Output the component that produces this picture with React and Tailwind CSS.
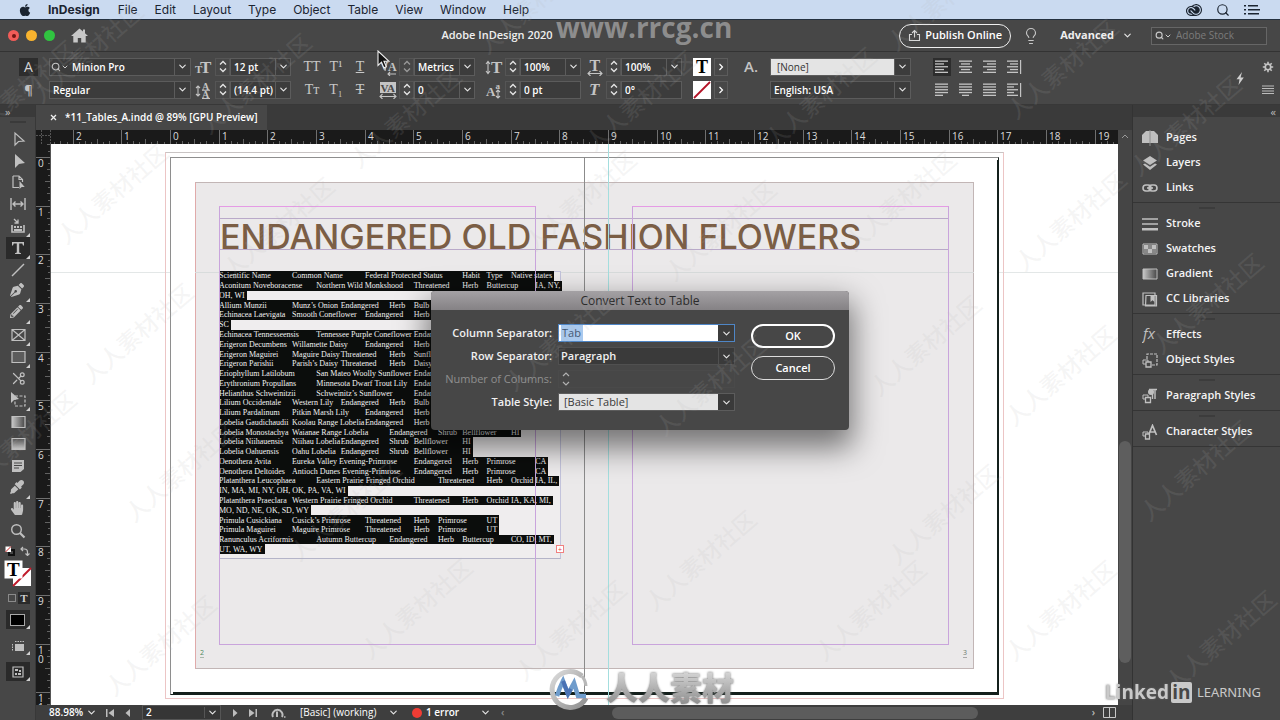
import React from "react";
import { FaApple, FaHandPaper, FaEyeDropper, FaPenNib, FaPencilAlt } from "react-icons/fa";
import { SiAdobecreativecloud } from "react-icons/si";
import { ChevronDown, Search, Scissors, Lightbulb } from "lucide-react";

const INCH = 48.66;
const TAB = INCH / 2;

const MENUS = ["File", "Edit", "Layout", "Type", "Object", "Table", "View", "Window", "Help"];

// Each line is a list of [tab stop, text] pairs.
const LINES = [
  [[0, "Scientific Name"], [3, "Common Name"], [6, "Federal Protected Status"], [10, "Habit"], [11, "Type"], [12, "Native states"]],
  [[0, "Aconitum Noveboracense"], [4, "Northern Wild Monkshood"], [8, "Threatened"], [10, "Herb"], [11, "Buttercup"], [13, "IA, NY,"]],
  [[0, "OH, WI"]],
  [[0, "Allium Munzii"], [3, "Munz’s Onion"], [5, "Endangered"], [7, "Herb"], [8, "Bulb"]],
  [[0, "Echinacea Laevigata"], [3, "Smooth Coneflower"], [6, "Endangered"], [8, "Herb"]],
  [[0, "SC"]],
  [[0, "Echinacea Tennesseensis"], [4, "Tennessee Purple Coneflower"], [8, "Endangered"]],
  [[0, "Erigeron Decumbens"], [3, "Willamette Daisy"], [6, "Endangered"], [8, "Herb"]],
  [[0, "Erigeron Maguirei"], [3, "Maguire Daisy"], [5, "Threatened"], [7, "Herb"], [8, "Sunflower"]],
  [[0, "Erigeron Parishii"], [3, "Parish’s Daisy"], [5, "Threatened"], [7, "Herb"], [8, "Daisy"]],
  [[0, "Eriophyllum Latilobum"], [4, "San Mateo Woolly Sunflower"], [8, "Endangered"]],
  [[0, "Erythronium Propullans"], [4, "Minnesota Dwarf Trout Lily"], [8, "Endangered"]],
  [[0, "Helianthus Schweinitzii"], [4, "Schweinitz’s Sunflower"], [8, "Endangered"]],
  [[0, "Lilium Occidentale"], [3, "Western Lily"], [5, "Endangered"], [7, "Herb"], [8, "Bulb"]],
  [[0, "Lilium Pardalinum"], [3, "Pitkin Marsh Lily"], [6, "Endangered"], [8, "Herb"]],
  [[0, "Lobelia Gaudichaudii"], [3, "Koolau Range Lobelia"], [6, "Endangered"], [8, "Herb"]],
  [[0, "Lobelia Monostachya"], [3, "Waianae Range Lobelia"], [7, "Endangered"], [9, "Shrub"], [10, "Bellflower"], [12, "HI"]],
  [[0, "Lobelia Niihauensis"], [3, "Niihau Lobelia"], [5, "Endangered"], [7, "Shrub"], [8, "Bellflower"], [10, "HI"]],
  [[0, "Lobelia Oahuensis"], [3, "Oahu Lobelia"], [5, "Endangered"], [7, "Shrub"], [8, "Bellflower"], [10, "HI"]],
  [[0, "Oenothera Avita"], [3, "Eureka Valley Evening-Primrose"], [8, "Endangered"], [10, "Herb"], [11, "Primrose"], [13, "CA"]],
  [[0, "Oenothera Deltoides"], [3, "Antioch Dunes Evening-Primrose"], [8, "Endangered"], [10, "Herb"], [11, "Primrose"], [13, "CA"]],
  [[0, "Platanthera Leucophaea"], [4, "Eastern Prairie Fringed Orchid"], [9, "Threatened"], [11, "Herb"], [12, "Orchid"], [13, "IA, IL,"]],
  [[0, "IN, MA, MI, NY, OH, OK, PA, VA, WI"]],
  [[0, "Platanthera Praeclara"], [3, "Western Prairie Fringed Orchid"], [8, "Threatened"], [10, "Herb"], [11, "Orchid"], [12, "IA, KA, MI,"]],
  [[0, "MO, ND, NE, OK, SD, WY"]],
  [[0, "Primula Cusickiana"], [3, "Cusick’s Primrose"], [6, "Threatened"], [8, "Herb"], [9, "Primrose"], [11, "UT"]],
  [[0, "Primula Maguirei"], [3, "Maguire Primrose"], [6, "Threatened"], [8, "Herb"], [9, "Primrose"], [11, "UT"]],
  [[0, "Ranunculus Acriformis"], [4, "Autumn Buttercup"], [7, "Endangered"], [9, "Herb"], [10, "Buttercup"], [12, "CO, ID, MT,"]],
  [[0, "UT, WA, WY"]],
];

const MARKS = [
  [87, 52], [255, 83], [405, 117], [533, 3], [640, 100], [820, 97], [1062, 68], [942, 0], [1185, 125],
  [112, 193], [278, 227], [137, 333], [20, 90], [20, 440], [180, 471], [160, 645],
  [580, 200], [720, 230], [710, 385], [560, 340],
  [900, 200], [925, 345], [943, 514], [1070, 220], [1060, 375], [1207, 303], [1195, 470],
  [345, 510], [416, 608], [570, 630], [700, 560], [870, 610], [1060, 610], [1220, 640],
];

function Chev({ className = "" }) {
  return <ChevronDown className={"pointer-events-none size-[11px] shrink-0 text-[#e6e6e6] " + className} strokeWidth={2.5} aria-hidden="true" />;
}

function Drop({ label, value, className, arrow = "w-4", field = "bg-[#3c3c3c] text-white", pad = "pl-[3px]", icon }) {
  return (
    <div className={"relative flex h-[18px] items-center border border-[#5c5c5c] " + field + " " + className}>
      {icon}
      <select aria-label={label} defaultValue={value} className={"h-full min-w-0 flex-1 appearance-none bg-transparent leading-4 outline-none " + pad}>
        <option>{value}</option>
      </select>
      <span className={"pointer-events-none flex h-full items-center justify-center border-l border-[#5c5c5c] bg-[#3c3c3c] " + arrow}>
        <Chev />
      </span>
    </div>
  );
}

function Stepper({ dim }) {
  return (
    <button aria-label="Step value" className={"flex h-[18px] w-[15px] flex-col items-center justify-center border border-[#555] " + (dim ? "text-[#9a9a9a]" : "text-[#e6e6e6]")}>
      <svg width="8" height="13" viewBox="0 0 8 13" fill="none" stroke="currentColor" strokeWidth="1.3"><path d="M1 4.5 4 1.5 7 4.5M1 8.5 4 11.5 7 8.5" /></svg>
    </button>
  );
}

function NumField({ label, value, drop = true, dim, width = "w-[61px]" }) {
  return (
    <div className="flex">
      <Stepper dim={dim} />
      <div className={"flex h-[18px] items-center border border-[#5c5c5c] bg-[#3c3c3c] " + width}>
        <input aria-label={label} defaultValue={value} className="h-full w-0 min-w-0 flex-1 bg-transparent pl-[3px] text-white outline-none" />
        {drop && <span className="flex h-full w-[15px] items-center justify-center border-l border-[#5c5c5c]"><Chev /></span>}
      </div>
    </div>
  );
}

function Glyph({ children, w = 18, h = 18, label }) {
  return (
    <svg width={w} height={h} viewBox={`0 0 ${w} ${h}`} className="shrink-0 text-[#c4c4c4]" role="img" aria-label={label}>{children}</svg>
  );
}

const serif = { fontFamily: "Liberation Serif, serif" };

function Arrow({ d }) {
  return <path d={d} fill="none" stroke="currentColor" strokeWidth="1.1" />;
}

function AlignIcon({ rows, bar }) {
  return (
    <svg width="16" height="16" viewBox="0 0 16 16" fill="#c4c4c4" aria-hidden="true">
      {rows.map(([x, w], i) => <rect key={i} x={x} y={1.5 + i * 2.8} width={w} height="1.3" />)}
      {bar && <rect x="14" y="1" width="1.2" height="14" />}
    </svg>
  );
}

const ALIGNS = [
  ["Align left", [[1, 13], [1, 9], [1, 13], [1, 9], [1, 13]]],
  ["Align center", [[1, 13], [3, 9], [1, 13], [3, 9], [1, 13]]],
  ["Align right", [[1, 13], [5, 9], [1, 13], [5, 9], [1, 13]]],
  ["Align towards spine", [[1, 11], [4, 8], [1, 11], [4, 8], [1, 11]], true],
  ["Justify last left", [[1, 13], [1, 13], [1, 13], [1, 13], [1, 8]]],
  ["Justify last center", [[1, 13], [1, 13], [1, 13], [1, 13], [4, 7]]],
  ["Justify all", [[1, 13], [1, 13], [1, 13], [1, 13], [1, 13]]],
  ["Align away from spine", [[1, 11], [1, 7], [1, 11], [1, 7], [1, 11]], true],
];

function MenuBar() {
  return (
    <nav className="flex h-5 shrink-0 items-center border-b border-[#24303f] bg-[#cadaf0] font-['Inter',sans-serif] text-[12px] text-[#1b2430]">
      <FaApple className="ml-[18px] size-[14px]" aria-label="Apple menu" />
      <button className="ml-4 font-bold">InDesign</button>
      <div className="ml-[18px] flex gap-[17px]">
        {MENUS.map((m) => <button key={m}>{m}</button>)}
      </div>
      <div className="ml-auto flex items-center gap-[14px] pr-5">
        <SiAdobecreativecloud className="size-[16px]" aria-label="Creative Cloud" />
        <Search className="size-[14px]" aria-label="Search" />
        <svg width="16" height="12" viewBox="0 0 16 12" fill="currentColor" role="img" aria-label="Notifications"><path d="M0 1h2v1.6H0zM4 1h10v1.6H4zM0 5h2v1.6H0zM4 5h12v1.6H4zM0 9h2v1.6H0zM4 9h11v1.6H4z" /></svg>
      </div>
    </nav>
  );
}

function TitleBar() {
  return (
    <header className="grid h-8 shrink-0 grid-cols-[1fr_auto_1fr] items-center border-b border-[#333] bg-[#474747] text-[11px] text-[#efefef]">
      <div className="flex items-center pl-2">
        <button aria-label="Close window" className="flex size-[11px] items-center justify-center rounded-full bg-[#f25c58]"><span className="size-1 rounded-full bg-[#701512]" /></button>
        <button aria-label="Minimize window" className="ml-[7px] size-[11px] rounded-full bg-[#f8b32e]" />
        <button aria-label="Zoom window" className="ml-[7px] size-[11px] rounded-full bg-[#30c440]" />
        <button aria-label="Home" className="ml-4">
          <svg width="17" height="15" viewBox="0 0 17 15" fill="#c8c8c8"><path d="M8.500 .5 0 8h2.300v6.500h4.500v-4.500h3.400v4.500h4.500V8H17l-3-2.700V1.500h-2v2z" /></svg>
        </button>
      </div>
      <div className="pr-[286px] font-semibold">Adobe InDesign 2020</div>
      <div className="flex items-center justify-end pr-[13px]">
        <button className="-ml-60 flex h-6 shrink-0 items-center gap-1 rounded-full border border-[#efefef] px-2 font-semibold whitespace-nowrap text-white">
          <svg width="13" height="13" viewBox="0 0 13 13" fill="none" stroke="#d8d8d8" strokeWidth="1.1"><path d="M4 5.500H1.500v6h10v-6H9M6.500 8.500V1.500M4 4l2.500-2.500L9 4" /></svg>
          Publish Online
        </button>
        <Lightbulb className="ml-[11px] size-[18px] shrink-0 text-[#c8c8c8]" strokeWidth={1.5} aria-label="Learn" />
        <button className="ml-5 flex items-center gap-2 font-bold">Advanced <Chev /></button>
        <div className="ml-[18px] flex h-[18px] w-[116px] items-center border border-[#666] bg-[#414141] pl-[3px]">
          <Search className="size-[9px] shrink-0 text-[#c8c8c8]" strokeWidth={3} /><Chev className="!size-2" />
          <input aria-label="Search Adobe Stock" placeholder="Adobe Stock" className="ml-1 w-0 flex-1 bg-transparent text-[10px] outline-none placeholder:text-[#7c7c7c]" />
        </div>
      </div>
    </header>
  );
}

function Pair({ className = "", children }) {
  return <div className={"flex shrink-0 flex-col gap-[5px] " + className}>{children}</div>;
}

function ControlBar() {
  return (
    <section aria-label="Character controls" className="flex h-[53px] shrink-0 items-center border-b border-[#383838] bg-[#474747] text-[10px] font-semibold text-white">
      <Pair className="ml-[19px]">
        <button aria-label="Character formatting" className="flex h-[18px] w-[19px] items-center justify-center bg-[#2d2d2d] text-[14px] font-medium text-[#d4d4d4]">A</button>
        <button aria-label="Paragraph formatting" className="h-[18px] w-[19px] text-[13px] leading-4 text-[#c4c4c4]">¶</button>
      </Pair>
      <Pair className="ml-[11px]">
        <Drop label="Font" value="Minion Pro" className="w-[142px]" icon={<span className="ml-px flex shrink-0 items-center"><Search className="size-[10px] text-[#c8c8c8]" strokeWidth={2.500} /><Chev className="!size-[8px]" /></span>} />
        <Drop label="Font style" value="Regular" className="w-[142px]" />
      </Pair>
      <Pair className="ml-[3px]">
        <Glyph label="Font size"><text x="1" y="15" fontSize="11" fontWeight="700" fill="currentColor" style={serif}>T</text><text x="6" y="15" fontSize="17" fontWeight="700" fill="currentColor" style={serif}>T</text></Glyph>
        <Glyph label="Leading"><text x="8" y="8.500" fontSize="10" fill="currentColor" style={serif}>A</text><text x="8" y="17" fontSize="10" fill="currentColor" style={serif}>A</text><Arrow d="M8 9.200h8M8 17.500h8M4 5v10M2 7l2-2 2 2M2 13l2 2 2-2" /></Glyph>
      </Pair>
      <Pair className="ml-[3px]">
        <NumField label="Font size" value="12 pt" />
        <NumField label="Leading" value="(14.4 pt)" />
      </Pair>
      <div className="ml-3 grid shrink-0 grid-cols-3 gap-x-[6px] gap-y-[5px]">
        {[["All caps", "T", "T"], ["Superscript", "T", "¹"], ["Underline", "T", ""], ["Small caps", "T", "ᴛ"], ["Subscript", "T", "₁"], ["Strikethrough", "T", ""]].map(([l, a, b]) => (
          <button key={l} aria-label={l} className={"h-[18px] w-[18px] font-['Liberation_Serif',serif] text-[14px] leading-[18px] font-medium whitespace-nowrap text-[#c8c8c8] " + (l === "Underline" ? "underline" : l === "Strikethrough" ? "line-through" : "")}>{a}{b}</button>
        ))}
      </div>
      <Pair className="ml-[10px]">
        <Glyph label="Kerning"><text x="1" y="12" fontSize="12" fill="currentColor" style={serif}>V</text><text x="9" y="13" fontSize="12" fill="currentColor" style={serif}>A</text><Arrow d="M8 2 6 13M17 16H9M11 14l-2 2 2 2" /></Glyph>
        <Glyph label="Tracking"><rect x="1" y="1" width="16" height="11" fill="#c4c4c4" /><text x="1.500" y="11" fontSize="11" fontWeight="700" fill="#474747" style={serif}>VA</text><Arrow d="M1 15.500h16M3.500 13 1 15.500 3.500 18M14.500 13l2.500 2.500L14.500 18" /></Glyph>
      </Pair>
      <Pair className="ml-[2px]">
        <NumField label="Kerning" value="Metrics" dim />
        <NumField label="Tracking" value="0" />
      </Pair>
      <Pair className="ml-[10px]">
        <Glyph label="Vertical scale"><text x="6" y="15" fontSize="17" fill="currentColor" style={serif}>T</text><Arrow d="M3 4v11M1 6l2-2.500L5 6M1 13l2 2.500L5 13" /></Glyph>
        <Glyph label="Baseline shift"><text x="1" y="15" fontSize="13" fill="currentColor" style={serif}>A</text><text x="10.500" y="8" fontSize="9" fontWeight="700" fill="currentColor" style={serif}>a</text><Arrow d="M13 9v8M11 11l2-2 2 2M11 15l2 2 2-2" /></Glyph>
      </Pair>
      <Pair className="ml-[2px]">
        <NumField label="Vertical scale" value="100%" />
        <NumField label="Baseline shift" value="0 pt" drop={false} />
      </Pair>
      <Pair className="ml-[5px]">
        <Glyph label="Horizontal scale"><text x="3.500" y="12.500" fontSize="16" fontWeight="700" fill="currentColor" style={serif}>T</text><Arrow d="M2 15.500h14M4.500 13 2 15.500 4.500 18M13.500 13l2.500 2.500L13.500 18" /></Glyph>
        <Glyph label="Skew"><text x="3" y="14" fontSize="17" fontStyle="italic" fontWeight="700" fill="currentColor" style={serif}>T</text></Glyph>
      </Pair>
      <Pair className="ml-[2px]">
        <NumField label="Horizontal scale" value="100%" />
        <NumField label="Skew" value="0°" drop={false} />
      </Pair>
      <Pair className="ml-[11px]">
        <button aria-label="Fill" className="h-[18px] w-[18px] border border-white bg-white font-['Liberation_Serif',serif] text-[18px] leading-4 font-bold text-black">T</button>
        <button aria-label="Stroke" className="h-[18px] w-[18px] bg-white"><svg width="18" height="18" viewBox="0 0 18 18"><path d="M1 17 17 1" stroke="#b31226" strokeWidth="1.800" /></svg></button>
      </Pair>
      <Pair className="ml-[3px]">
        {["Fill options", "Stroke options"].map((l) => (
          <button key={l} aria-label={l} className="flex h-[18px] w-[14px] items-center justify-center border border-[#5c5c5c] text-white"><svg width="6" height="8" viewBox="0 0 6 8" fill="none" stroke="currentColor" strokeWidth="1.200"><path d="M1.500 1 4.500 4 1.500 7" /></svg></button>
        ))}
      </Pair>
      <Pair className="ml-[16px]">
        <span className="flex h-[18px] w-[18px] items-center text-[15px] font-semibold text-[#c4c4c4]">A.</span>
        <span className="h-[18px]" />
      </Pair>
      <Pair className="ml-2">
        <Drop label="Character style" value="[None]" className="w-[141px]" field="bg-[#e4e4e4] text-[#333] font-medium" pad="pl-[6px]" />
        <Drop label="Language" value="English: USA" className="w-[141px]" />
      </Pair>
      <div className="ml-[22px] grid shrink-0 grid-cols-4 gap-x-[6px] gap-y-[5px]">
        {ALIGNS.map(([l, rows, bar], i) => (
          <button key={l} aria-label={l} className={"flex h-[18px] w-[18px] items-center justify-center " + (i === 0 ? "bg-[#2d2d2d]" : "")}><AlignIcon rows={rows} bar={bar} /></button>
        ))}
      </div>
      <button aria-label="Quick apply" className="ml-auto"><svg width="10" height="15" viewBox="0 0 10 15"><path d="M7 1 1.500 8.200h3L3.500 14 8.800 6.500H5.600z" fill="#cfcfcf" /></svg></button>
      <Pair className="mr-[6px] ml-[17px] items-center">
        <button aria-label="Customize" className="flex h-[18px] items-center">
          <svg width="12" height="12" viewBox="-6 -6 12 12" fill="none" stroke="#c4c4c4"><circle r="2.800" strokeWidth="1.800" /><path d="M0-5.200V-3M0 3v2.200M-5.200 0H-3M3 0h2.200M-3.700-3.700l1.500 1.500M2.200 2.200l1.500 1.500M-3.700 3.700l1.500-1.500M2.200-2.200l1.500-1.500" strokeWidth="1.600" /></svg>
        </button>
        <button aria-label="Panel menu" className="flex h-[18px] items-center"><svg width="12" height="9" viewBox="0 0 12 9"><path d="M0 1h12M0 3.500h12M0 6h12M0 8.500h12" stroke="#bcbcbc" /></svg></button>
      </Pair>
    </section>
  );
}

const c = "#c0c0c0";
const TOOLS = [
  ["Selection", <path d="M5 2v12l3.500-3.500L14 10z" fill="none" stroke={c} strokeWidth="1.200" />],
  ["Direct selection", <path d="M5 1v14l4-4 6-1z" fill={c} />],
  ["Page", <g><path d="M3 2h6l3.500 3.500V8M3 2v11.500h6M9 2v3.500h3.500" fill="none" stroke={c} strokeWidth="1.200" /><path d="M9.500 7v8l2.200-2h3z" fill={c} /></g>],
  ["Gap", <path d="M1 2v12M15 2v12M3 8h10M5.500 5.500 3 8l2.500 2.500M10.500 5.500 13 8l-2.500 2.500" fill="none" stroke={c} strokeWidth="1.400" />],
  ["Content collector", <g><path d="M2 7v7h12V7" fill="none" stroke={c} strokeWidth="1.600" /><path d="M4 8h2v2H4zM7 8h2v2H7zM10 8h2v2h-2zM4 11h8v2H4z" fill={c} /><path d="m4 1 4 4M8 1.500V5H4.500" fill="none" stroke={c} strokeWidth="1.300" /></g>, 1],
  ["Type", <path d="M2 2h12v3.500h-1l-.7-2H9.200v9l1.800.7v.8H5v-.8l1.800-.7v-9H3.700l-.7 2H2z" fill={c} />, 1],
  ["Line", <path d="M2 14 14 2" stroke={c} strokeWidth="1.400" />],
  ["Pen", <FaPenNib size="14" color={c} />, 1],
  ["Pencil", <FaPencilAlt size="13" color={c} />, 1],
  ["Rectangle frame", <path d="M2 2.500h13v11H2zM2 2.500l13 11M15 2.500l-13 11" fill="none" stroke={c} strokeWidth="1.200" />, 1],
  ["Rectangle", <path d="M2 2.500h13v11H2z" fill="#5c5c5c" stroke={c} strokeWidth="1.200" />, 1],
  ["Scissors", <g transform="matrix(-1 0 0 1 16 0)"><Scissors size="15" color={c} /></g>],
  ["Free transform", <g><path d="M5 4h10v10H5z" fill="none" stroke={c} strokeWidth="1.200" strokeDasharray="3 1.500" /><path d="M1 0v11l3-3 5-1z" fill={c} /></g>, 1],
  ["Gradient swatch", <path d="M2 2.500h13v11H2z" fill="url(#gradH)" stroke={c} strokeWidth="1.200" />],
  ["Gradient feather", <path d="M2 2.500h13v11H2z" fill="url(#gradV)" stroke={c} strokeWidth="1.200" />],
  ["Note", <g><path d="M2 2h12v9l-3.500 3H2z" fill={c} /><path d="M4 5h8M4 7.500h8M4 10h5" stroke="#474747" /></g>],
  ["Eyedropper", <FaEyeDropper size="14" color={c} />, 1],
  ["Hand", <FaHandPaper size="14" color={c} />],
  ["Zoom", <g fill="none" stroke={c}><circle cx="6.500" cy="6.500" r="4.800" strokeWidth="1.400" /><path d="m10 10 4.500 4.500" strokeWidth="2.200" /></g>],
];

function Corner() {
  return <svg className="absolute right-0 bottom-0" width="4" height="4" viewBox="0 0 4 4" aria-hidden="true"><path d="M4 0v4H0z" fill="#d0d0d0" /></svg>;
}

function Toolbar() {
  return (
    <aside aria-label="Tools" className="flex w-9 shrink-0 flex-col border-r border-[#383838] bg-[#474747]">
      <button aria-label="Expand tools" className="h-3 bg-[#3a3a3a] pl-[5px] text-left text-[11px] leading-[9px] text-[#bdbdbd]">»</button>
      <div className="mx-auto mt-[4px] h-[2px] w-4 bg-[#3a3a3a]" />
      <svg width="0" height="0" className="absolute">
        <defs>
          <linearGradient id="gradH"><stop offset="0" stopColor="#c8c8c8" /><stop offset="1" stopColor="#474747" /></linearGradient>
          <linearGradient id="gradV" x2="0" y2="1"><stop offset="0" stopColor="#555" /><stop offset="1" stopColor="#c8c8c8" /></linearGradient>
        </defs>
      </svg>
      <div className="mt-[5px] flex h-[414px] flex-col items-center">
        {TOOLS.map(([l, icon, more]) => (
          <button key={l} aria-label={l} className={"relative flex w-6 flex-1 items-center justify-center " + (l === "Type" ? "bg-[#2a2a2a]" : "")}>
            <svg width="16" height="16" viewBox="0 0 16 16">{icon}</svg>
            {more && <Corner />}
          </button>
        ))}
      </div>
      <div className="mt-1 flex justify-between px-[5px]">
        <button aria-label="Default fill and stroke"><svg width="10" height="10" viewBox="0 0 10 10"><path d="M4 4h5v5H4z" fill="none" stroke="#111" strokeWidth="2" /><path d="M.5.500h5.500V6H.5z" fill="#fff" /><path d="M.5 6 6 .5" stroke="#c22" /></svg></button>
        <button aria-label="Swap fill and stroke"><svg width="10" height="10" viewBox="0 0 10 10" fill="none" stroke={c} strokeWidth="1.200"><path d="M1 3h3.500A3 3 0 0 1 7.500 6v3M3 1 1 3l2 2M5.500 7.500l2 2 2-2" /></svg></button>
      </div>
      <button aria-label="Fill and stroke" className="mt-[4px] ml-1">
        <svg width="28" height="27" viewBox="0 0 28 27"><path d="M9 8h18v18H9z" fill="#fff" /><path d="M9 26 27 8" stroke="#c01a2a" strokeWidth="2" /><path d="M.5.500h18v18H.5z" fill="#fff" /><text x="3" y="15.500" fontSize="19" fontWeight="700" style={serif}>T</text></svg>
      </button>
      <div className="mt-[5px] flex items-center justify-between pr-[5px] pl-2">
        <button aria-label="Format container" className="size-2 border border-[#8a8a8a]" />
        <button aria-label="Format text" className="size-3 bg-[#2a2a2a] font-['Liberation_Serif',serif] text-[11px] leading-3 font-bold text-[#d0d0d0]">T</button>
      </div>
      <div className="mt-[6px] flex flex-col items-center gap-[7px]">
        <button aria-label="Apply color" className="relative flex h-[19px] w-6 items-center justify-center bg-[#2a2a2a]"><span className="h-3 w-[15px] border border-[#a8a8a8] bg-black" /><Corner /></button>
        <button aria-label="View options" className="relative flex h-[19px] w-6 items-center justify-center"><svg width="14" height="12" viewBox="0 0 14 12"><path d="M4 4h9v7H4z" fill={c} /><path d="M4 1.500h9M1.500 4v7" stroke={c} strokeDasharray="1.500 1" /></svg><Corner /></button>
        <button aria-label="Screen mode" className="relative flex h-[19px] w-6 items-center justify-center bg-[#2a2a2a]"><svg width="12" height="12" viewBox="0 0 12 12"><path d="M1 1h10v10H1z" fill="none" stroke={c} strokeWidth="1.200" /><path d="M3 3h3v2H3zM7 4h2v2H7zM3 7h2v2H3zM6 7h3v2H6z" fill={c} /></svg><Corner /></button>
      </div>
    </aside>
  );
}

// Ruler marks: long ticks on the inch, shorter ones at each eighth.
function Ticks({ from, count, origin, vertical }) {
  const items = [];
  for (let n = from; n <= from + count; n++) {
    const p = Math.round(origin + n * INCH);
    const label = String(Math.abs(n));
    items.push(
      <g key={n}>
        <path d={vertical ? `M0 ${p}.5H14` : `M${p}.5 0V14`} stroke="#6f6f6f" />
        {vertical
          ? label.split("").map((ch, i) => <text key={i} x="2" y={p + 10 + i * 9} fontSize="10" fill="#dcdcdc">{ch}</text>)
          : <text x={p + 3} y="10" fontSize="10" fill="#dcdcdc">{label}</text>}
        {[1, 2, 3, 4, 5, 6, 7].map((k) => {
          const q = Math.round(p + (k * INCH) / 8);
          const s = k === 4 ? 9 : k % 2 ? 12 : 11;
          return <path key={k} d={vertical ? `M${s} ${q}.5H14` : `M${q}.5 ${s}V14`} stroke="#626262" />;
        })}
      </g>
    );
  }
  return items;
}

function Spread() {
  return (
    <div className="relative h-full w-full overflow-hidden bg-white" role="document">
      <div className="absolute top-[128px] left-0 h-px w-full bg-[#e3e7e7]" />
      <div className="absolute top-[8px] left-[114px] h-[547px] w-[839px] border border-[#ecc5c5] border-t-[#c9c4c4]" />
      <div className="absolute top-[13px] left-[119px] h-[538px] w-[829px] border border-t-[#8e8e8e] border-r-[#14201c] border-b-[#14201c] border-l-[#8e8e8e] bg-white" />
      <div className="absolute top-[548px] left-[122px] h-[2px] w-[826px] bg-[#14201c]" />
      <div className="absolute top-[16px] left-[946px] h-[534px] w-[2px] bg-[#14201c]" />
      <div className="absolute top-[38px] left-[144px] h-[487px] w-[779px] border border-[#c2b6b6] border-l-[#e0aaaa] bg-[#ebe9ea]" />
      <div className="absolute top-[128px] left-[144px] h-px w-[779px] bg-[#d8dcdc]" />
      <div className="absolute top-[127px] left-[168px] h-[288px] w-[342px] border border-[#c3c3dc] border-b-[#b4b4c8] bg-[#efedee]" />
      <div className="absolute top-[74px] left-[168px] h-[32px] w-[730px] border-y border-[#b9a9c9]" />
      <h1 className="absolute top-[74px] left-[169px] font-['Inter',sans-serif] text-[34px] leading-[38px] font-medium whitespace-nowrap text-[#7b5e45]">ENDANGERED OLD FASHION FLOWERS</h1>
      <div className="absolute top-[127px] left-[168px] flex h-[283px] flex-col font-['Liberation_Serif',serif] text-[8px] leading-none text-[#f2f2f2]">
        {LINES.map((line, i) => (
          <div key={i} className="flex flex-1 items-center self-start bg-[#0b0d0c] pt-px pr-[2px] whitespace-nowrap">
            {line.map(([stop, text], j) => {
              const next = line[j + 1];
              return <span key={j} className="block shrink-0" style={next ? { width: (next[0] - stop) * TAB } : undefined}>{text}</span>;
            })}
          </div>
        ))}
      </div>
      <div className="absolute top-[62px] left-[168px] h-[439px] w-[317px] border border-[#c9a4dc] border-t-[#e59be5]" />
      <div className="absolute top-[62px] left-[581px] h-[439px] w-[317px] border border-[#c9a4dc] border-t-[#e59be5]" />
      <div className="absolute top-[13px] left-[533px] h-[536px] w-px bg-[#8b8b8b]" />
      <div className="absolute top-0 left-[557px] h-full w-px bg-[#a4dede]" />
      <div className="absolute top-[401px] left-[505px] flex size-[8px] items-center justify-center border border-[#f08080] bg-white text-[7px] leading-none text-[#e04040]">+</div>
      <span className="absolute top-[505px] left-[149px] border-b border-[#a8b8ac] text-[7px] leading-[8px] text-[#4c8a5c]">2</span>
      <span className="absolute top-[505px] left-[912px] border-b border-[#a8a8a8] text-[7px] leading-[8px] text-[#6c7a6c]">3</span>
    </div>
  );
}

function StatusBar() {
  const nav = "flex h-full shrink-0 items-center text-[#bdbdbd]";
  return (
    <footer className="flex h-[15px] shrink-0 items-center overflow-hidden bg-[#3e3e3e] text-[10px] font-semibold text-white">
      <button className="w-[50px] shrink-0 pl-[13px] text-left whitespace-nowrap">88.98%</button>
      <button aria-label="Zoom levels" className="w-[14px] shrink-0"><Chev /></button>
      <button aria-label="First page" className={nav + " ml-[6px]"}><svg width="8" height="8" viewBox="0 0 8 8" fill="currentColor"><path d="M0 0h1.500v8H0zM8 0v8L2.500 4z" /></svg></button>
      <button aria-label="Previous page" className={nav + " ml-[11px]"}><svg width="6" height="8" viewBox="0 0 6 8" fill="currentColor"><path d="M5 0v8L.5 4z" /></svg></button>
      <div className="ml-[11px] flex h-full w-[79px] shrink-0 items-center border border-[#555] bg-[#363636]">
        <input aria-label="Page" defaultValue="2" className="w-0 flex-1 bg-transparent pl-[3px] outline-none" />
        <span className="border-l border-[#555] px-[2px]"><Chev /></span>
      </div>
      <button aria-label="Next page" className={nav + " ml-[11px]"}><svg width="6" height="8" viewBox="0 0 6 8" fill="currentColor"><path d="M1 0v8L5.500 4z" /></svg></button>
      <button aria-label="Last page" className={nav + " ml-[11px]"}><svg width="8" height="8" viewBox="0 0 8 8" fill="currentColor"><path d="M6.500 0H8v8H6.500zM0 0v8L5.500 4z" /></svg></button>
      <button aria-label="Open" className={nav + " ml-[14px]"}><svg width="15" height="12" viewBox="0 0 15 12" fill="none" stroke="currentColor"><path d="M2 10a5 5 0 1 1 9 0M6 10V4.500" strokeWidth="2" /><path d="M13 10h1.500" strokeWidth="1.500" /></svg></button>
      <button className="ml-[14px] w-[88px] shrink-0 text-left font-medium whitespace-nowrap">[Basic] (working)</button>
      <Chev />
      <span className="ml-[13px] size-[10px] shrink-0 rounded-full bg-[#f03c34]" />
      <span className="ml-1 w-[54px] shrink-0 whitespace-nowrap">1 error</span>
      <Chev />
      <span className="ml-[10px] text-[#8c8c8c]">‹</span>
      <div className="ml-[108px] h-3 flex-[0_1_366px] rounded-full bg-[#5c5c5c]" />
      <span className="ml-auto text-[#bdbdbd]">›</span>
      <button aria-label="Split layout" className="mr-4 ml-2"><svg width="13" height="11" viewBox="0 0 13 11" fill="none" stroke="#c8c8c8"><path d="M.5.500h12v10H.5zM6.500 .5v10" /></svg></button>
    </footer>
  );
}

function Dialog() {
  const pill = "flex h-[24px] w-[84px] items-center justify-center rounded-full text-[11px] font-semibold text-white";
  return (
    <div role="dialog" aria-labelledby="dlg-title" className="absolute top-[186px] left-[395px] w-[418px] overflow-hidden rounded-[4px] bg-[#474747] shadow-[0_14px_30px_4px_rgba(0,0,0,0.5)]">
      <h2 id="dlg-title" className="h-[19px] bg-linear-to-b from-[#a4a1a4] to-[#858285] text-center text-[12px] leading-[20px] font-medium text-[#2b2b2b]">Convert Text to Table</h2>
      <form className="flex h-[120px] items-start gap-4 pt-[14px] pl-[10px]" onSubmit={(e) => e.preventDefault()}>
        <div className="grid grid-cols-[111px_177px] items-center gap-x-[6px] gap-y-[5px] text-[11px] leading-[18px] font-semibold text-[#f0f0f0]">
          <label htmlFor="colsep" className="text-right whitespace-nowrap">Column Separator:</label>
          <div className="flex h-[18px] border border-[#4f86c6] bg-white">
            <span className="flex flex-1 items-center pl-[2px]"><input id="colsep" defaultValue="Tab" className="h-4 w-[22px] bg-[#a9c9ee] pl-px font-medium text-[#3b5270] outline-none" /></span>
            <button type="button" aria-label="Column separator choices" className="flex w-4 items-center justify-center bg-[#3c3c3c]"><Chev /></button>
          </div>
          <label htmlFor="rowsep" className="text-right whitespace-nowrap">Row Separator:</label>
          <div className="flex h-[18px] border border-[#505050] bg-[#3a3a3a]">
            <input id="rowsep" defaultValue="Paragraph" className="w-0 flex-1 bg-transparent pl-[2px] outline-none" />
            <button type="button" aria-label="Row separator choices" className="flex w-4 items-center justify-center border-l border-[#505050]"><Chev /></button>
          </div>
          <label htmlFor="numcols" className="text-right font-medium whitespace-nowrap text-[#8f8f8f]">Number of Columns:</label>
          <div className="flex h-[18px] items-center border border-[#4a4a4a] pl-[3px]">
            <svg width="8" height="14" viewBox="0 0 8 14" fill="none" stroke="#b0b0b0" strokeWidth="1.200"><path d="M1 4 4 1 7 4M1 10l3 3 3-3" /></svg>
            <input id="numcols" disabled className="w-0 flex-1 bg-transparent" />
          </div>
          <label htmlFor="tstyle" className="text-right whitespace-nowrap">Table Style:</label>
          <div className="relative flex h-[18px] border border-[#5c5c5c] bg-[#e4e4e4]">
            <select id="tstyle" className="flex-1 appearance-none bg-transparent pl-[5px] leading-4 font-medium text-[#3a3a3a] outline-none"><option>[Basic Table]</option></select>
            <span className="pointer-events-none flex w-4 items-center justify-center bg-[#3a3a3a]"><Chev /></span>
          </div>
        </div>
        <div className="flex flex-col gap-2">
          <button className={pill + " border-2 border-white"}>OK</button>
          <button type="button" className={pill + " border border-[#dcdcdc]"}>Cancel</button>
        </div>
      </form>
    </div>
  );
}

const PANELS = [
  [
    ["Pages", <path d="M0 5 4 1h3.500v12H0zM8.500 1H12l4 4v8H8.500zM7.700 0h.6v16h-.6z" fill={c} />],
    ["Layers", <path d="M8 1l7 4.500-7 4.500-7-4.500zM1 9.500l2-1 5 3.300 5-3.300 2 1L8 15z" fill={c} />],
    ["Links", <g fill="none" stroke={c} strokeWidth="1.600"><rect x="1" y="5" width="8" height="6" rx="3" /><rect x="7" y="5" width="8" height="6" rx="3" /><path d="M5 8h6" /></g>],
  ],
  [
    ["Stroke", <path d="M0 3h16M0 8h16" stroke={c} strokeWidth="1.500" fill="none" />, <path d="M0 12h16v2.500H0z" fill={c} />],
    ["Swatches", <g><path d="M1 3h14v10H1z" fill="none" stroke={c} /><path d="M2 4h4v4H2zM10 4h4v4h-4zM6 8h4v4H6z" fill={c} /><path d="M6 4h4v4H6zM2 8h4v4H2zM10 8h4v4h-4z" fill="#888" /></g>],
    ["Gradient", <path d="M1 3h14v10H1z" fill="url(#gradH)" stroke={c} />],
    ["CC Libraries", <g><path d="M1 2h12v12H1zM4 4.500h10.500V15H3.500z" fill="#474747" stroke={c} strokeWidth="1.200" /><path d="M8.500 4.500h4V11l-2-1.700L8.500 11z" fill={c} /></g>],
  ],
  [
    ["Effects", <text x="1" y="12" fontSize="15" fontStyle="italic" fontWeight="400" fill={c}>fx</text>],
    ["Object Styles", <g fill="none" stroke={c}><path d="M5 7V2h10v11h-5" strokeWidth="1.200" strokeDasharray="3 1" /><path d="M1 8h5v4H1z" /><path d="M4 10h5v5H4z" fill="#474747" strokeWidth="1.300" /></g>],
  ],
  [["Paragraph Styles", <g fill="none" stroke={c}><path d="M10.500 1v10M13 1v10M7 1.500h8" strokeWidth="1.400" /><circle cx="9" cy="4" r="3" fill={c} stroke="none" /><path d="M1 7h5v4H1z" /><path d="M3.500 9.500h5v5h-5z" fill="#474747" strokeWidth="1.300" /></g>]],
  [["Character Styles", <g fill="none" stroke={c}><path d="M7 10 10.500 1.500 14.500 11M8.500 8H13" strokeWidth="1.700" /><path d="M1 8h5v4H1z" /><path d="M3.500 10h4v5h-4z" fill="#474747" strokeWidth="1.300" /></g>]],
];

function PanelDock() {
  return (
    <aside aria-label="Panels" className="flex w-[148px] shrink-0 flex-col border-l border-[#333] bg-[#474747]">
      <button aria-label="Collapse panels" className="h-3 bg-[#3a3a3a] pr-1 text-right text-[11px] leading-[9px] text-[#bdbdbd]">«</button>
      {PANELS.map((group, i) => (
        <div key={i} className={"flex flex-col border-b border-[#353535] pb-[2px] " + (i ? "" : "pt-2")}>
          {i > 0 && <div className="mx-auto mt-1 mb-[2px] h-[2px] w-4 bg-[#3c3c3c]" />}
          {group.map(([label, icon, extra]) => (
            <button key={label} className="flex h-[25px] items-center gap-2 pl-[9px] text-[11px] font-semibold text-[#f4f4f4]">
              <svg width="16" height="16" viewBox="0 0 16 16" aria-hidden="true">{icon}{extra}</svg>
              {label}
            </button>
          ))}
        </div>
      ))}
    </aside>
  );
}

function Overlays() {
  return (
    <div className="pointer-events-none absolute inset-0 overflow-hidden" aria-hidden="true">
      {MARKS.map(([x, y], i) => (
        <span key={i} style={{ left: x, top: y }} className="absolute -translate-x-1/2 -translate-y-1/2 -rotate-[41deg] font-['Noto_Sans_CJK_SC',sans-serif] text-[23px] leading-none font-medium whitespace-nowrap text-[#b4b4b4]/12">人人素材社区</span>
      ))}
      <div className="absolute top-[9px] left-[556px] font-['Open_Sans',sans-serif] text-[28px] leading-9 font-bold text-[#9a9a9a]/85">www.rrcg.cn</div>
      <svg className="absolute top-[50px] left-[377px]" width="13" height="20" viewBox="0 0 13 20"><path d="M1 1v14.500l3.500-3.300 2.300 5.500 2.500-1-2.300-5.400H12z" fill="#111" stroke="#eee" strokeWidth="1.100" /></svg>
      <div className="absolute bottom-2 left-[548px] flex items-center gap-[14px]">
        <svg width="44" height="44" viewBox="0 0 44 44">
          <defs><linearGradient id="ring" x2="1" y2="1"><stop offset="0" stopColor="#dcdcdc" /><stop offset="1" stopColor="#8e8e8e" /></linearGradient></defs>
          <path d="M34 8A18 18 0 1 0 38 30" fill="none" stroke="url(#ring)" strokeWidth="5" />
          <path d="M34 8A18 18 0 0 1 38 18" fill="none" stroke="#b8b8b8" strokeWidth="3" />
          <path d="M9 28c2-6 3-9 6-15l5 13 6-11 4 13h8" fill="none" stroke="#6f9ccc" strokeWidth="4.500" />
          <path d="M15 13l5 13 3-5" fill="none" stroke="#4a72b4" strokeWidth="4" />
        </svg>
        <span className="relative -top-1 bg-linear-to-b from-[#dedede] to-[#8f8f8f] bg-clip-text font-['Noto_Sans_CJK_SC',sans-serif] text-[32px] leading-9 font-black text-transparent drop-shadow-[0_0_1px_#777]">人人素材</span>
      </div>
      <div className="absolute right-[19px] bottom-[17px] flex items-center font-['Open_Sans',sans-serif] text-[#c9c9c9]">
        <span className="text-[19px] leading-[22px] font-bold drop-shadow-[0_0_1px_#666]">Linked</span>
        <span className="ml-[2px] flex h-[21px] w-[21px] items-center justify-center rounded-[2px] bg-[#c9c9c9] text-[19px] leading-[18px] font-bold text-[#474747]">in</span>
        <span className="ml-[5px] font-['Noto_Sans',sans-serif] text-[13px] leading-5">LEARNING</span>
      </div>
    </div>
  );
}

export default function App() {
  return (
    <div className="relative flex h-screen flex-col overflow-hidden bg-[#3a3a3a] font-['Open_Sans',sans-serif]">
      <MenuBar />
      <TitleBar />
      <ControlBar />
      <div className="flex min-h-0 flex-1">
        <Toolbar />
        <main className="relative flex min-w-0 flex-1 flex-col">
          <div className="flex h-[25px] shrink-0 bg-[#3a3a3a]">
            <div className="flex items-center gap-2 bg-[#474747] pr-[9px] pl-[14px] text-[10px] font-semibold text-white">
              <button aria-label="Close document"><svg width="7" height="7" viewBox="0 0 7 7" stroke="#eee" strokeWidth="1.300"><path d="M1 1l5 5M6 1 1 6" /></svg></button>
              <span>*11_Tables_A.indd @ 89% [GPU Preview]</span>
            </div>
          </div>
          <div className="flex min-h-0 flex-1">
            <div className="grid min-w-0 flex-1 grid-cols-[15px_1fr] grid-rows-[14px_1fr]">
              <div className="bg-[#1a1a1a]"><svg width="15" height="14"><path d="M5.500 0v14M0 5.500h15M14.500 0v14" stroke="#555" strokeDasharray="2 1" /></svg></div>
              <div className="overflow-hidden bg-[#1a1a1a]"><svg width="100%" height="14"><Ticks from={-3} count={23} origin={119} /></svg></div>
              <div className="overflow-hidden border-r border-[#555] bg-[#1a1a1a]"><svg width="14" height="100%"><Ticks from={-1} count={13} origin={13} vertical /></svg></div>
              <Spread />
            </div>
            <div className="flex w-[14px] shrink-0 flex-col items-center bg-[#454545]">
              <svg className="mt-1" width="8" height="5" viewBox="0 0 8 5" fill="none" stroke="#999"><path d="M1 4l3-3 3 3" /></svg>
              <div className="flex-[302]" />
              <div className="w-3 flex-[222] rounded-full bg-[#5e5e5e]" />
              <div className="flex-[42]" />
            </div>
          </div>
          <StatusBar />
          <Dialog />
        </main>
        <PanelDock />
      </div>
      <Overlays />
    </div>
  );
}
